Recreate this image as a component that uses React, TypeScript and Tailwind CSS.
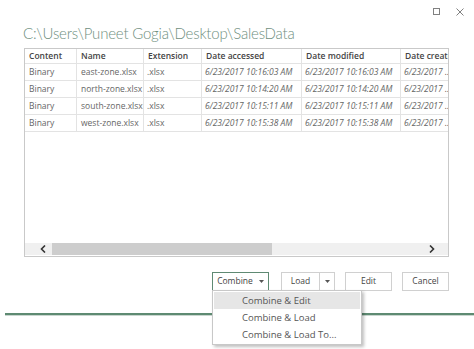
import React from "react";

const font = { fontFamily: '"Open Sans", "Noto Sans", sans-serif' };

const columns = [
	{ title: "Content", width: "w-[52px]" },
	{ title: "Name", width: "w-[67px]" },
	{ title: "Extension", width: "w-[58px]" },
	{ title: "Date accessed", width: "w-[100px]" },
	{ title: "Date modified", width: "w-[99px]" },
	{ title: "Date create", width: "w-[47px]" },
];

const rows = [
	{ name: "east-zone.xlsx", time: "10:16:03 AM" },
	{ name: "north-zone.xlsx", time: "10:14:20 AM" },
	{ name: "south-zone.xlsx", time: "10:15:11 AM" },
	{ name: "west-zone.xlsx", time: "10:15:38 AM" },
];

const menuItems = ["Combine & Edit", "Combine & Load", "Combine & Load To..."];

const Caret = () => (
	<svg width="5" height="3" viewBox="0 0 5 3" className="fill-[#555]">
		<path d="M0 0h5L2.5 3z" />
	</svg>
);

const App = () => {
	return (
		<div className="relative w-[474px] h-[349px] bg-white overflow-hidden" style={font}>
			{/* Window controls */}
			<div className="flex justify-end items-center gap-[16px] h-[22px] pr-[10px] pt-[1px]">
				<div className="w-[7px] h-[7px] border border-[#808080]" />
				<svg width="8" height="8" viewBox="0 0 8 8" className="stroke-[#808080]">
					<path d="M0.5 0.5L7.5 7.5M7.5 0.5L0.5 7.5" strokeWidth="1" />
				</svg>
			</div>

			{/* Title */}
			<h1 className="pl-[23px] h-[26px] text-[15px] leading-[22px] font-light text-[#6f8f80] tracking-[-0.2px]" style={{ fontFamily: 'Lato, "Open Sans", sans-serif' }}>
				C:\Users\Puneet Gogia\Desktop\SalesData
			</h1>

			{/* Table */}
			<div className="ml-[24px] w-[425px] h-[209px] border border-[#c9c9c9] flex flex-col">
				<div className="flex-1 overflow-hidden">
					<div className="flex h-[15px] border-b border-[#e3e3e3] text-[8.5px] font-semibold text-[#444] leading-[14px] whitespace-nowrap">
						{columns.map((col, i) => (
							<div key={col.title} className={`${col.width} shrink-0 px-[4px] overflow-hidden ${i < columns.length - 1 ? "border-r border-[#e3e3e3]" : ""}`}>
								{col.title}
							</div>
						))}
					</div>
					{rows.map((row) => (
						<div key={row.name} className="flex h-[17px] border-b border-[#e3e3e3] text-[8.5px] text-[#666] leading-[16px] whitespace-nowrap">
							<div className="w-[52px] shrink-0 px-[4px] border-r border-[#e3e3e3]">Binary</div>
							<div className="w-[67px] shrink-0 px-[4px] border-r border-[#e3e3e3]">{row.name}</div>
							<div className="w-[58px] shrink-0 px-[3px] border-r border-[#e3e3e3]">.xlsx</div>
							<div className="w-[100px] shrink-0 px-[3px] border-r border-[#e3e3e3] italic">6/23/2017 {row.time}</div>
							<div className="w-[99px] shrink-0 px-[3px] border-r border-[#e3e3e3] italic">6/23/2017 {row.time}</div>
							<div className="w-[47px] shrink-0 px-[3px] overflow-hidden italic">6/23/2017 …</div>
						</div>
					))}
				</div>
				{/* Horizontal scrollbar */}
				<div className="flex items-center h-[12px] bg-[#f0f0f0] mb-[1px]">
					<div className="w-[27px] flex justify-center pl-[8px]">
						<svg width="6" height="8" viewBox="0 0 6 8" className="stroke-[#333] fill-none">
							<path d="M5 0.5L1.5 4L5 7.5" strokeWidth="1.6" />
						</svg>
					</div>
					<div className="w-[220px] h-full bg-[#cdcdcd]" />
					<div className="flex-1 flex justify-end pr-[13px]">
						<svg width="6" height="8" viewBox="0 0 6 8" className="stroke-[#333] fill-none">
							<path d="M1 0.5L4.5 4L1 7.5" strokeWidth="1.6" />
						</svg>
					</div>
				</div>
			</div>

			{/* Buttons */}
			<div className="flex mt-[15px] ml-[212px] h-[19px] text-[8.5px] text-[#444] gap-[10px]">
				<div className="relative">
					<button className="w-[57px] h-[19px] border border-[#5f8a73] flex items-center justify-center gap-[6px] bg-white">
						Combine <Caret />
					</button>
					{/* Dropdown menu */}
					<div className="absolute left-0 top-[18px] w-[150px] h-[55px] bg-white border border-[#c8c8c8] shadow-[2px_2px_3px_rgba(0,0,0,0.25)] z-10 py-[1px] px-[1px] text-[9.5px] text-[#555]">
						{menuItems.map((item, i) => (
							<div key={item} className={`h-[17px] leading-[17px] pl-[28px] ${i === 0 ? "bg-[#e6e6e6]" : ""}`}>
								{item}
							</div>
						))}
					</div>
				</div>
				<div className="flex h-[19px] border border-[#d0d0d0] ml-[2px]">
					<div className="w-[38px] flex items-center justify-center border-r border-[#d0d0d0]">Load</div>
					<div className="w-[14px] flex items-center justify-center">
						<Caret />
					</div>
				</div>
				<div className="w-[47px] h-[19px] border border-[#d0d0d0] flex items-center justify-center">Edit</div>
				<div className="w-[47px] h-[19px] border border-[#d0d0d0] flex items-center justify-center">Cancel</div>
			</div>

			{/* Ribbon divider behind dialog */}
			<div className="mt-[22px] ml-[5px] h-[2px] bg-[#5e8a72]" />
			<div className="ml-[5px] h-[1px] bg-[#c9d6cf]" />
		</div>
	);
};

export default App;
